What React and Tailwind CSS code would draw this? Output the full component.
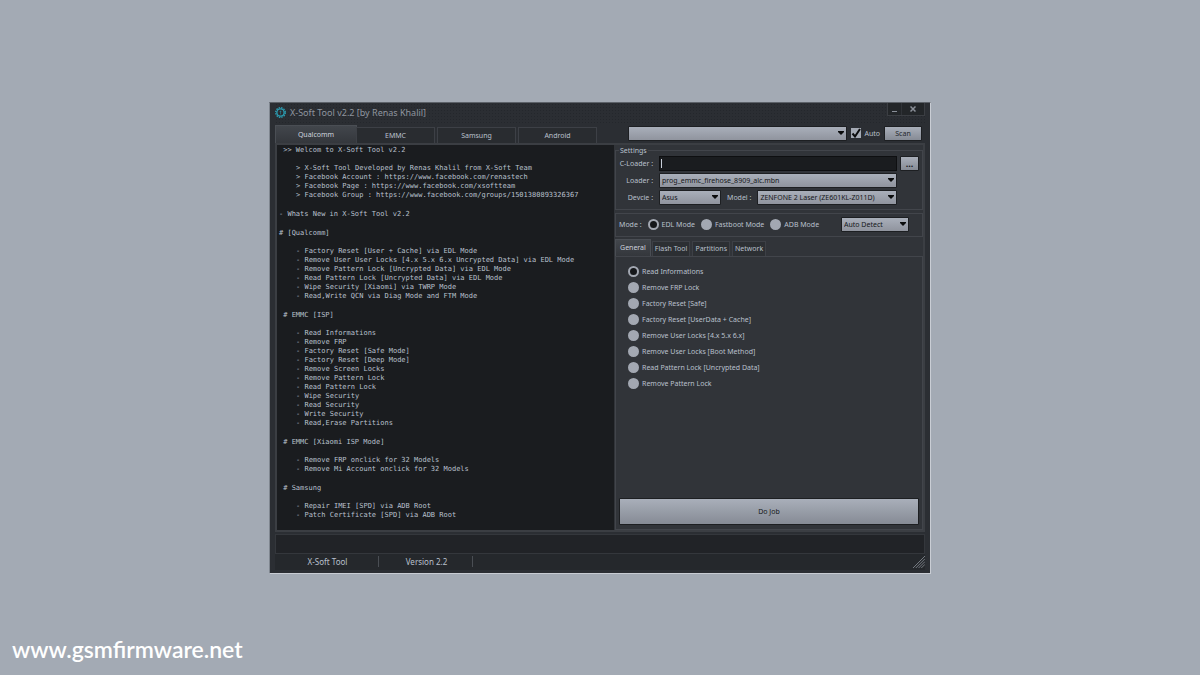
import { useState } from 'react';

const SECTIONS = [
    {
        title: ' >> Welcom to X-Soft Tool v2.2',
        lines: [
            '> X-Soft Tool Developed by Renas Khalil from X-Soft Team',
            '> Facebook Account : https://www.facebook.com/renastech',
            '> Facebook Page : https://www.facebook.com/xsoftteam',
            '> Facebook Group : https://www.facebook.com/groups/1501380893326367',
        ],
    },
    { title: '- Whats New in X-Soft Tool v2.2', lines: [] },
    {
        title: '# [Qualcomm]',
        lines: [
            '- Factory Reset [User + Cache] via EDL Mode',
            '- Remove User User Locks [4.x 5.x 6.x Uncrypted Data] via EDL Mode',
            '- Remove Pattern Lock [Uncrypted Data] via EDL Mode',
            '- Read Pattern Lock [Uncrypted Data] via EDL Mode',
            '- Wipe Security [Xiaomi] via TWRP Mode',
            '- Read,Write QCN via Diag Mode and FTM Mode',
        ],
    },
    {
        title: ' # EMMC [ISP]',
        lines: [
            '- Read Informations',
            '- Remove FRP',
            '- Factory Reset [Safe Mode]',
            '- Factory Reset [Deep Mode]',
            '- Remove Screen Locks',
            '- Remove Pattern Lock',
            '- Read Pattern Lock',
            '- Wipe Security',
            '- Read Security',
            '- Write Security',
            '- Read,Erase Partitions',
        ],
    },
    {
        title: ' # EMMC [Xiaomi ISP Mode]',
        lines: ['- Remove FRP onclick for 32 Models', '- Remove Mi Account onclick for 32 Models'],
    },
    {
        title: ' # Samsung',
        lines: ['- Repair IMEI [SPD] via ADB Root', '- Patch Certificate [SPD] via ADB Root'],
    },
];

const CHIP_TABS = ['Qualcomm', 'EMMC', 'Samsung', 'Android'];
const JOB_TABS = ['General', 'Flash Tool', 'Partitions', 'Network'];
const MODES = ['EDL Mode', 'Fastboot Mode', 'ADB Mode'];
const JOBS = [
    'Read Informations',
    'Remove FRP Lock',
    'Factory Reset [Safe]',
    'Factory Reset [UserData + Cache]',
    'Remove User Locks [4.x 5.x 6.x]',
    'Remove User Locks [Boot Method]',
    'Read Pattern Lock [Uncrypted Data]',
    'Remove Pattern Lock',
];

const GearIcon = () => (
    <svg className="size-[11px] text-[#2b9bb0]" viewBox="0 0 24 24" fill="none" stroke="currentColor">
        <circle cx="12" cy="12" r="10.500" strokeWidth="3" strokeDasharray="3.300 2.200" />
        <circle cx="12" cy="12" r="8" strokeWidth="3" />
        <path d="M12 8v8M10 10h4" strokeWidth="1.500" opacity="0.7" />
    </svg>
);

const Select = ({ id, label, options, className = '' }) => (
    <div className={`relative h-[15px] ${className}`}>
        <select
            id={id}
            aria-label={label}
            className="block h-full w-full appearance-none rounded-[1px] border border-[#1d1f22] bg-linear-to-b from-[#a9afba] to-[#90949e] pl-[2px] pr-2 text-[#15171a]"
        >
            {options.map((option) => (
                <option key={option}>{option}</option>
            ))}
        </select>
        <svg className="pointer-events-none absolute right-[3px] top-[5px] h-1 w-[6px]" viewBox="0 0 6 4">
            <path d="M0 0h6v1L3 4 0 1z" fill="#0b0c0d" />
        </svg>
    </div>
);

const Radio = ({ name, label, checked, onChange }) => (
    <label className="flex items-center gap-[3px] whitespace-nowrap">
        <input
            type="radio"
            name={name}
            checked={checked}
            onChange={onChange}
            className="size-[11px] appearance-none rounded-full border-2 border-[#a3a8b2] bg-[#a3a8b2] checked:bg-[#15171a]"
        />
        {label}
    </label>
);

const App = () => {
    const [chip, setChip] = useState('Qualcomm');
    const [mode, setMode] = useState('EDL Mode');
    const [tab, setTab] = useState('General');
    const [job, setJob] = useState('Read Informations');
    const [auto, setAuto] = useState(true);

    return (
        <div className="relative flex min-h-screen items-center justify-center bg-[#a3aab4] font-['Noto_Sans',sans-serif] text-[7px] leading-[11px] text-[#b9c0cd]">
            <main className="w-full max-w-[662px] border border-l-[#7f868f] border-t-[#5c6168] border-r-[#c9cdd4] border-b-[#c9cdd4] bg-[#2b2e33] px-[5px] pb-[3px]">
                <header className="flex h-[22px] items-start justify-between bg-[radial-gradient(#24272c_1px,transparent_1px)] bg-size-[3px_3px]">
                    <h1 className="flex h-5 items-center gap-1 text-[9px] text-[#8f959f]">
                        <GearIcon />
                        X-Soft Tool v2.2 [by Renas Khalil]
                    </h1>
                    <div className="flex h-[13px] border border-t-0 border-[#3b3e43] bg-[#232629]">
                        <button type="button" aria-label="Minimize" className="flex w-[14px] items-end justify-center border-r border-[#303338] pb-[3px]">
                            <span className="h-px w-[5px] bg-[#8a8f98]" />
                        </button>
                        <button type="button" aria-label="Close" className="flex w-[22px] items-center justify-center">
                            <svg className="size-[6px]" viewBox="0 0 6 6" stroke="#8a8f98" strokeWidth="1.500">
                                <path d="M0.500 0.500l5 5M5.500 0.500l-5 5" />
                            </svg>
                        </button>
                    </div>
                </header>

                <div className="grid grid-cols-[12fr_11fr]">
                    <div role="tablist" className="flex items-end gap-[2px]">
                        {CHIP_TABS.map((name) => (
                            <button
                                key={name}
                                type="button"
                                role="tab"
                                aria-selected={chip === name}
                                onClick={() => setChip(name)}
                                className={
                                    chip === name
                                        ? '-mr-[3px] h-[18px] w-[82px] border border-b-0 border-[#4a4e54] bg-linear-to-b from-[#42464c] to-[#34373c] text-[#cdd3de]'
                                        : 'h-4 w-[79px] border border-b-0 border-[#3d4046] bg-[#292c30]'
                                }
                            >
                                {name}
                            </button>
                        ))}
                    </div>
                    <div className="flex items-center gap-1 pb-px pl-[14px] pr-[3px]">
                        <Select label="Port" options={['']} className="flex-1" />
                        <label className="flex items-center gap-[3px]">
                            <span className="relative size-[10px]">
                                <input
                                    type="checkbox"
                                    checked={auto}
                                    onChange={(e) => setAuto(e.target.checked)}
                                    className="block size-[10px] appearance-none bg-[#a4aab4]"
                                />
                                {auto && (
                                    <svg className="pointer-events-none absolute inset-0 size-[10px]" viewBox="0 0 10 10" fill="none" stroke="#0b0c0d" strokeWidth="2">
                                        <path d="M1.500 5.500l2.500 3L9 1" />
                                    </svg>
                                )}
                            </span>
                            Auto
                        </label>
                        <button type="button" className="h-[15px] w-[38px] rounded-[1px] border border-[#1d1f22] bg-linear-to-b from-[#a9afba] to-[#868b95] text-[#24272c]">
                            Scan
                        </button>
                    </div>
                </div>

                <div className="grid grid-cols-[12fr_11fr] border-2 border-[#3b3e43]">
                    <section aria-label="Log" className="flex flex-col gap-[10px] bg-[#1a1c1f] pb-[10px] pl-[2px] pt-px font-['DejaVu_Sans_Mono',monospace] text-[7px] leading-[9px]">
                        {SECTIONS.map((section) => (
                            <div key={section.title} className="flex flex-col gap-[9px] whitespace-pre">
                                <h2>{section.title}</h2>
                                {section.lines.length > 0 && (
                                    <ul className="pl-[17px]">
                                        {section.lines.map((line) => (
                                            <li key={line}>{line}</li>
                                        ))}
                                    </ul>
                                )}
                            </div>
                        ))}
                    </section>

                    <section aria-label="Job" className="flex flex-col bg-[#313439] pl-px">
                        <fieldset className="flex flex-col gap-[2px] border border-[#42454b] pb-[4px] pl-px pr-[3px]">
                            <legend className="ml-[2px] px-px">Settings</legend>
                            <div className="flex items-center gap-[6px]">
                                <label htmlFor="c-loader" className="w-9 whitespace-nowrap text-right">C-Loader :</label>
                                <div className="relative min-w-0 flex-1">
                                    <input id="c-loader" type="text" className="peer block h-[15px] w-full border border-[#0e0f11] bg-[#1a1c1f] px-[2px] outline-none" />
                                    <span className="pointer-events-none absolute left-[2px] top-[3px] h-[9px] w-px bg-[#c9cfda] peer-focus:hidden" />
                                </div>
                                <button type="button" aria-label="Browse" className="-ml-[3px] h-[15px] w-[19px] rounded-[1px] border border-[#1d1f22] bg-linear-to-b from-[#a9afba] to-[#868b95] text-[9px] font-bold text-[#15171a]">
                                    ...
                                </button>
                            </div>
                            <div className="flex items-center gap-[6px] pr-[22px]">
                                <label htmlFor="loader" className="w-9 text-right">Loader :</label>
                                <Select id="loader" options={['prog_emmc_firehose_8909_alc.mbn']} className="flex-1" />
                            </div>
                            <div className="flex items-center gap-[6px] pr-[22px]">
                                <label htmlFor="device" className="w-9 text-right">Devcie :</label>
                                <Select id="device" options={['Asus']} className="w-[62px]" />
                                <label htmlFor="model">Model :</label>
                                <Select id="model" options={['ZENFONE 2 Laser (ZE601KL-Z011D)']} className="flex-1" />
                            </div>
                        </fieldset>

                        <div role="radiogroup" aria-label="Mode" className="mt-[3px] flex h-6 items-center gap-[6px] border border-[#42454b] pl-[3px] pr-[13px]">
                            <span className="whitespace-nowrap">Mode :</span>
                            {MODES.map((name) => (
                                <Radio key={name} name="mode" label={name} checked={mode === name} onChange={() => setMode(name)} />
                            ))}
                            <Select label="Detection" options={['Auto Detect']} className="ml-auto w-[68px]" />
                        </div>

                        <div role="tablist" className="mt-[2px] flex items-end gap-[2px]">
                            {JOB_TABS.map((name) => (
                                <button
                                    key={name}
                                    type="button"
                                    role="tab"
                                    aria-selected={tab === name}
                                    onClick={() => setTab(name)}
                                    className={
                                        tab === name
                                            ? '-mr-px h-[17px] border border-b-0 border-[#4a4e54] bg-linear-to-b from-[#42464c] to-[#34373c] px-1 text-[#cdd3de]'
                                            : 'h-[15px] border border-b-0 border-[#3d4046] bg-[#2c2f33] px-[2px]'
                                    }
                                >
                                    {name}
                                </button>
                            ))}
                        </div>

                        <div className="flex flex-1 flex-col justify-between border border-[#42454b] px-[3px] pb-1 pt-[9px]">
                            <div role="radiogroup" aria-label="Operation" className="flex flex-col gap-[5px] pl-[9px]">
                                {JOBS.map((name) => (
                                    <Radio key={name} name="job" label={name} checked={job === name} onChange={() => setJob(name)} />
                                ))}
                            </div>
                            <button type="button" className="h-[27px] rounded-[1px] border border-[#1d1f22] bg-linear-to-b from-[#a9afba] to-[#868b95] text-[#15171a]">
                                Do Job
                            </button>
                        </div>
                    </section>
                </div>

                <div className="mt-[2px] h-5 border border-[#34373c] bg-[#212327]" />
                <footer className="flex h-4 items-center bg-[#25282c] text-[8px]">
                    <span className="w-[104px] border-r border-[#4a4e54] pl-[2px] text-center">X-Soft Tool</span>
                    <span className="w-[94px] border-r border-[#4a4e54] pl-[2px] text-center">Version 2.2</span>
                    <svg className="ml-auto size-[12px]" viewBox="0 0 13 13" stroke="#7c8189">
                        <path d="M0 13L13 0M3 13L13 3M6 13l7-7M9 13l4-4" />
                    </svg>
                </footer>
            </main>
            <a href="#" className="absolute bottom-3 left-3 font-['Lato',sans-serif] text-[23px] font-semibold leading-7 text-white">
                www.gsmfirmware.net
            </a>
        </div>
    );
};

export default App;
